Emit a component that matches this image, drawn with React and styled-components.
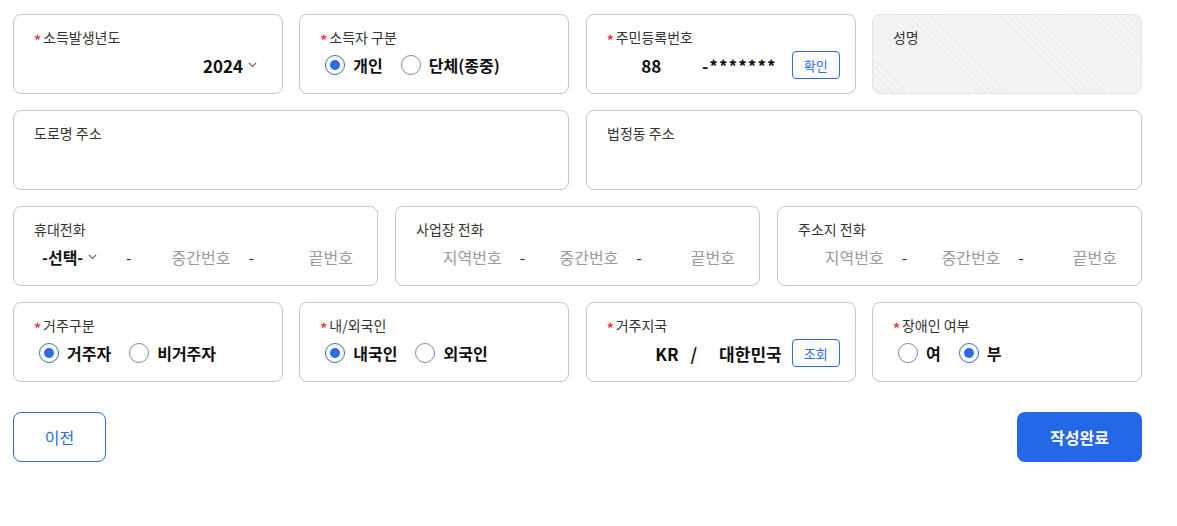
import styled, { createGlobalStyle } from 'styled-components';

const GlobalStyle = createGlobalStyle`
	body {
		margin: 0;
		background: #fff;
		font-family: 'Noto Sans CJK KR', 'Noto Sans', sans-serif;
		color: #111;
	}
`;

function Chevron() {
	return (
		<svg width="9" height="6" viewBox="0 0 9 6" fill="none">
			<path d="M1 1l3.5 3.5L8 1" stroke="#666" strokeWidth="1.2" />
		</svg>
	);
}

function Radio({ checked, label }) {
	return (
		<RadioOption>
			<RadioCircle $checked={checked} />
			<span>{label}</span>
		</RadioOption>
	);
}

function Label({ required, children }) {
	return (
		<FieldLabel>
			{required && <Star>*</Star>}
			{children}
		</FieldLabel>
	);
}

function PhoneParts({ first }) {
	return (
		<ValueRow>
			{first ? (
				<Select>
					-선택- <Chevron />
				</Select>
			) : (
				<Part>지역번호</Part>
			)}
			<Dash>-</Dash>
			<Part>중간번호</Part>
			<Dash>-</Dash>
			<Part>끝번호</Part>
		</ValueRow>
	);
}

function App() {
	return (
		<Page>
			<GlobalStyle />
			<Row $cols={4}>
				<Card>
					<Label required>소득발생년도</Label>
					<ValueRow $align="flex-end">
						<Year>
							2024 <Chevron />
						</Year>
					</ValueRow>
				</Card>
				<Card>
					<Label required>소득자 구분</Label>
					<RadioGroup>
						<Radio checked label="개인" />
						<Radio label="단체(종중)" />
					</RadioGroup>
				</Card>
				<Card>
					<Label required>주민등록번호</Label>
					<ValueRow $button>
						<IdFront>88</IdFront>
						<IdBack>-*******</IdBack>
						<SmallButton>확인</SmallButton>
					</ValueRow>
				</Card>
				<Card $disabled>
					<Label>성명</Label>
				</Card>
			</Row>
			<Row $cols={2}>
				<Card>
					<Label>도로명 주소</Label>
				</Card>
				<Card>
					<Label>법정동 주소</Label>
				</Card>
			</Row>
			<Row $cols={3}>
				<Card>
					<Label>휴대전화</Label>
					<PhoneParts first />
				</Card>
				<Card>
					<Label>사업장 전화</Label>
					<PhoneParts />
				</Card>
				<Card>
					<Label>주소지 전화</Label>
					<PhoneParts />
				</Card>
			</Row>
			<Row $cols={4}>
				<Card>
					<Label required>거주구분</Label>
					<RadioGroup>
						<Radio checked label="거주자" />
						<Radio label="비거주자" />
					</RadioGroup>
				</Card>
				<Card>
					<Label required>내/외국인</Label>
					<RadioGroup>
						<Radio checked label="내국인" />
						<Radio label="외국인" />
					</RadioGroup>
				</Card>
				<Card>
					<Label required>거주지국</Label>
					<ValueRow $align="flex-end" $button>
						<Value>KR</Value>
						<Slash>/</Slash>
						<Value>대한민국</Value>
						<SmallButton>조회</SmallButton>
					</ValueRow>
				</Card>
				<Card>
					<Label required>장애인 여부</Label>
					<RadioGroup>
						<Radio label="여" />
						<Radio checked label="부" />
					</RadioGroup>
				</Card>
			</Row>
			<Footer>
				<OutlineButton>이전</OutlineButton>
				<PrimaryButton>작성완료</PrimaryButton>
			</Footer>
		</Page>
	);
}

const Page = styled.div`
	width: 1129px;
	margin: 14px 0 0 13px;
	display: flex;
	flex-direction: column;
	gap: 16px;
`;

const Row = styled.div`
	display: grid;
	grid-template-columns: repeat(${(p) => p.$cols}, 1fr);
	column-gap: ${(p) => (p.$cols === 4 ? '16.3px' : '17px')};
`;

const Card = styled.div`
	height: 80px;
	box-sizing: border-box;
	border: 1px solid ${(p) => (p.$disabled ? '#e3e3e3' : '#c6c6c6')};
	border-radius: 8px;
	padding: 12px 24px 0 20px;
	background: ${(p) =>
		p.$disabled
			? 'repeating-linear-gradient(45deg, #f4f4f4 0, #f4f4f4 4px, #ececec 4px, #ececec 5px)'
			: '#fff'};
`;

const FieldLabel = styled.div`
	display: flex;
	align-items: center;
	height: 20px;
	font-size: 14px;
	color: #333;
`;

const Star = styled.span`
	color: #ef3b3b;
	font-size: 14px;
	font-weight: 700;
	line-height: 1;
	width: 9px;
	margin-top: 5px;
`;

const ValueRow = styled.div`
	display: flex;
	align-items: center;
	justify-content: ${(p) => p.$align || 'flex-start'};
	height: 32px;
	margin-top: 2px;
	margin-right: ${(p) => (p.$button ? '-9px' : '0')};
	font-size: 16px;
`;

const Year = styled.div`
	display: flex;
	align-items: center;
	gap: 5px;
	font-size: 17px;
	font-weight: 700;
	padding-right: 1px;
`;

const Value = styled.span`
	font-size: 17px;
	font-weight: 700;
	color: #111;
`;

const IdFront = styled(Value)`
	flex: 1;
	text-align: center;
	padding-left: 14px;
	margin-right: 20px;
`;

const IdBack = styled(Value)`
	letter-spacing: 1px;
	margin-right: 5px;
`;

const Slash = styled(Value)`
	margin: 0 22px 0 12px;
`;

const SmallButton = styled.button`
	width: 48px;
	height: 28px;
	margin-left: 10px;
	border: 1px solid #2b6be6;
	border-radius: 4px;
	background: #fff;
	color: #2b6be6;
	font-family: inherit;
	font-size: 13px;
	padding: 0;
`;

const RadioGroup = styled.div`
	display: flex;
	align-items: center;
	height: 32px;
	margin-top: 2px;
	padding-left: 5px;
	gap: 18px;
`;

const RadioOption = styled.label`
	display: flex;
	align-items: center;
	gap: 8px;
	font-size: 16px;
	font-weight: 700;
	color: #111;
`;

const RadioCircle = styled.span`
	width: 20px;
	height: 20px;
	box-sizing: border-box;
	border-radius: 50%;
	border: 1px solid ${(p) => (p.$checked ? '#2b6be6' : '#8a8a8a')};
	display: flex;
	align-items: center;
	justify-content: center;

	&::after {
		content: '';
		width: 10px;
		height: 10px;
		border-radius: 50%;
		background: ${(p) => (p.$checked ? '#2b6be6' : 'transparent')};
	}
`;

const Select = styled.div`
	display: flex;
	align-items: center;
	gap: 5px;
	width: 74px;
	padding-left: 8px;
	box-sizing: border-box;
	font-weight: 700;
	font-size: 16px;
`;

const Part = styled.div`
	flex: 1;
	text-align: right;
	color: #9a9a9a;
	font-size: 16px;
`;

const Dash = styled.div`
	width: 31px;
	padding-left: 18px;
	box-sizing: border-box;
	color: #333;
`;

const Footer = styled.div`
	display: flex;
	justify-content: space-between;
	margin-top: 14px;
`;

const OutlineButton = styled.button`
	width: 93px;
	height: 50px;
	border: 1px solid #2b6be6;
	border-radius: 8px;
	background: #fff;
	color: #2b6be6;
	font-family: inherit;
	font-size: 16px;
	font-weight: 400;
`;

const PrimaryButton = styled.button`
	width: 125px;
	height: 50px;
	border: none;
	border-radius: 8px;
	background: #2468e8;
	color: #fff;
	font-family: inherit;
	font-size: 16px;
	font-weight: 700;
`;

export default App;
